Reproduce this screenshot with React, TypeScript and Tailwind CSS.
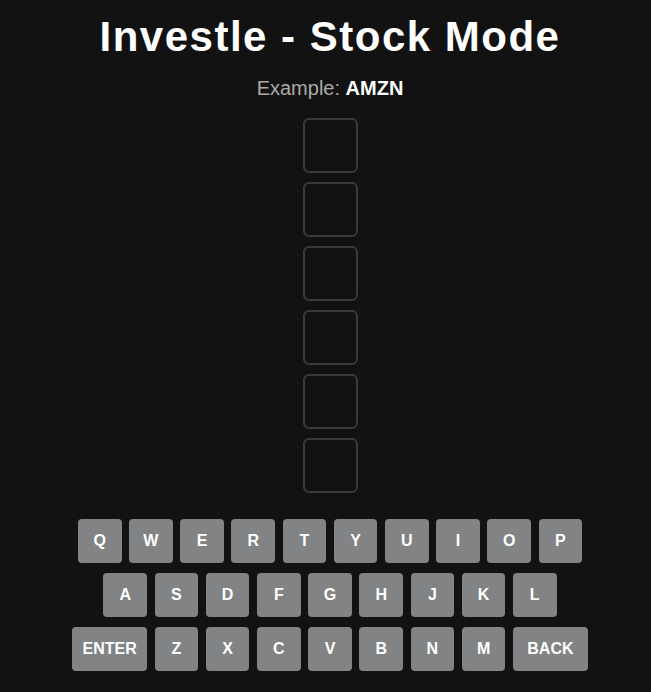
const rows = [
  ['Q', 'W', 'E', 'R', 'T', 'Y', 'U', 'I', 'O', 'P'],
  ['A', 'S', 'D', 'F', 'G', 'H', 'J', 'K', 'L'],
  ['ENTER', 'Z', 'X', 'C', 'V', 'B', 'N', 'M', 'BACK'],
];

export default function App() {
  return (
    <div className="min-h-screen bg-[#121212] pl-[9px] font-['Liberation_Sans',Arial,sans-serif] text-white">
      <div className="flex flex-col items-center">
        <h1 className="mt-[13px] text-[42px] font-bold leading-[48px] tracking-[1.5px]">Investle - Stock Mode</h1>
        <p className="mt-[15px] text-[20px] leading-[24px] text-[#aaaaaa]">
          Example: <span className="font-bold text-white">AMZN</span>
        </p>
        <div className="mt-[18px] flex flex-col gap-[9px]">
          {Array.from({ length: 6 }).map((_, i) => (
            <div key={i} className="h-[55px] w-[55px] rounded-[6px] border-2 border-[#3a3a3c]" />
          ))}
        </div>
        <div className="mt-[26px] flex flex-col gap-[10px]">
          {rows.map((row, r) => (
            <div key={r} className="flex justify-center gap-[7.5px]">
              {row.map((k) => (
                <button
                  key={k}
                  className={`flex h-[44px] items-center justify-center rounded-[4px] bg-[#818384] text-[16px] font-bold text-white ${
                    k.length > 1 ? 'w-[75px]' : 'w-[43.7px]'
                  }`}
                >
                  {k}
                </button>
              ))}
            </div>
          ))}
        </div>
      </div>
    </div>
  );
}
